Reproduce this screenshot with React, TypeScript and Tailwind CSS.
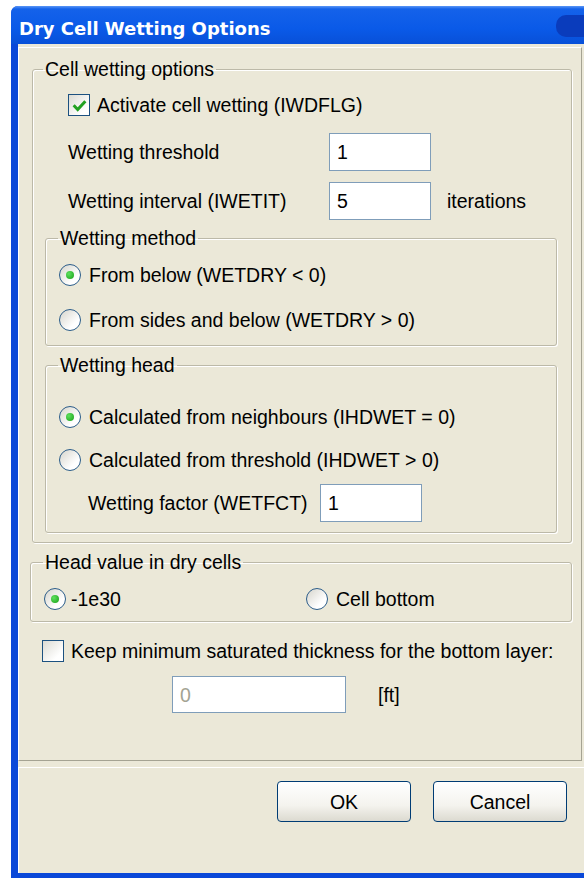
import { ReactNode } from "react";

function CheckBox({ checked }: { checked?: boolean }) {
  return (
    <span className="flex h-[22px] w-[22px] shrink-0 items-center justify-center border border-[#1c5180] bg-[linear-gradient(135deg,#dcdbd3,#ffffff_75%)]">
      {checked && (
        <svg viewBox="0 0 16 16" className="h-[17px] w-[17px]">
          <path d="M2.5 7.8 L6.3 11.8 L13.5 4" fill="none" stroke="#21a121" strokeWidth="2.8" />
        </svg>
      )}
    </span>
  );
}

function Radio({ checked }: { checked?: boolean }) {
  return (
    <span className="flex h-[22px] w-[22px] shrink-0 items-center justify-center rounded-full border border-[#2c5d8a] bg-[linear-gradient(135deg,#d6d5cc,#ffffff_70%)]">
      {checked && <span className="h-[8px] w-[8px] rounded-full bg-[radial-gradient(circle_at_35%_35%,#5fe05f,#16a016)]" />}
    </span>
  );
}

function Field({ value, className, disabled }: { value: string; className: string; disabled?: boolean }) {
  return (
    <div className={`flex items-center border border-[#7f9db9] bg-white px-[7px] ${disabled ? "text-[#a3a393]" : ""} ${className}`}>
      {value}
    </div>
  );
}

// etched group frame: grey line with a white line beside it
function Group({ label, className, children }: { label: string; className: string; children: ReactNode }) {
  return (
    <fieldset className={`rounded-[3px] border border-[#bcb9a8] shadow-[1px_1px_0_#ffffff,inset_1px_1px_0_#ffffff] ${className}`}>
      <legend className="px-[2px] leading-[22px]">{label}</legend>
      {children}
    </fieldset>
  );
}

export default function App() {
  return (
    <div className="h-[878px] w-[584px] overflow-hidden bg-white pl-[11px] pt-[6px] font-['Liberation_Sans',Arial,sans-serif] text-[19.5px] leading-[22px] text-black">
      <div className="flex h-[872px] flex-col overflow-hidden rounded-tl-[7px] bg-[#0a48d8]">
        {/* title bar */}
        <div className="flex h-[38px] shrink-0 items-center justify-between bg-[linear-gradient(#5a96f6_0px,#1462ea_3px,#0a5ae8_60%,#0850d8)] pl-[8px] pt-[8px]">
          <span className="font-['DejaVu_Sans',sans-serif] text-[18px] font-bold text-white">Dry Cell Wetting Options</span>
          <span className="mb-[6px] h-[22px] w-[28px] rounded-l-[10px] bg-[#0a3cbc]" />
        </div>

        <div className="mb-[5px] ml-[7px] flex flex-1 flex-col bg-[#ebe8d8] pt-[3px]">
          {/* options panel */}
          <div className="h-[714px] w-[564px] border border-b-[#a5a393] border-l-white border-r-[#a5a393] border-t-white">
            <Group label="Cell wetting options" className="ml-[13px] mt-[10px] w-[540px] pb-[9px] [&>legend]:ml-[10px]">
              <div className="mt-[14px] flex h-[22px] items-center gap-[7px] pl-[35px]">
                <CheckBox checked />
                <span>Activate cell wetting (IWDFLG)</span>
              </div>
              <div className="mt-[17px] flex h-[38px] items-center pl-[35px]">
                <span className="w-[261px]">Wetting threshold</span>
                <Field value="1" className="h-[38px] w-[102px]" />
              </div>
              <div className="mt-[11px] flex h-[38px] items-center pl-[35px]">
                <span className="w-[261px]">Wetting interval (IWETIT)</span>
                <Field value="5" className="h-[38px] w-[102px]" />
                <span className="ml-[16px]">iterations</span>
              </div>

              <Group label="Wetting method" className="ml-[12px] mt-[7px] w-[512px] pb-[14px] [&>legend]:ml-[12px]">
                <div className="mt-[15px] flex h-[22px] items-center gap-[8px] pl-[13px]">
                  <Radio checked />
                  <span>From below (WETDRY &lt; 0)</span>
                </div>
                <div className="mt-[23px] flex h-[22px] items-center gap-[8px] pl-[13px]">
                  <Radio />
                  <span>From sides and below (WETDRY &gt; 0)</span>
                </div>
              </Group>

              <Group label="Wetting head" className="ml-[12px] mt-[8px] w-[512px] pb-[10px] [&>legend]:ml-[12px]">
                <div className="mt-[30px] flex h-[22px] items-center gap-[8px] pl-[13px]">
                  <Radio checked />
                  <span>Calculated from neighbours (IHDWET = 0)</span>
                </div>
                <div className="mt-[21px] flex h-[22px] items-center gap-[8px] pl-[13px]">
                  <Radio />
                  <span>Calculated from threshold (IHDWET &gt; 0)</span>
                </div>
                <div className="mt-[13px] flex h-[38px] items-center pl-[42px]">
                  <span className="w-[232px]">Wetting factor (WETFCT)</span>
                  <Field value="1" className="h-[38px] w-[102px]" />
                </div>
              </Group>
            </Group>

            <Group label="Head value in dry cells" className="ml-[11px] mt-[8px] w-[542px] pb-[11px] [&>legend]:ml-[12px]">
              <div className="mt-[15px] flex h-[22px] items-center pl-[13px]">
                <div className="flex w-[262px] items-center gap-[5px]">
                  <Radio checked />
                  <span>-1e30</span>
                </div>
                <div className="flex items-center gap-[8px]">
                  <Radio />
                  <span>Cell bottom</span>
                </div>
              </div>
            </Group>

            <div className="ml-[23px] mt-[18px] flex h-[22px] items-center gap-[7px]">
              <CheckBox />
              <span>Keep minimum saturated thickness for the bottom layer:</span>
            </div>
            <div className="ml-[153px] mt-[14px] flex h-[37px] items-center">
              <Field value="0" disabled className="h-[37px] w-[174px]" />
              <span className="ml-[32px]">[ft]</span>
            </div>
          </div>

          {/* dialog buttons */}
          <div className="mt-[6px] flex flex-1 justify-end gap-[22px] border-l border-t border-white pr-[17px] pt-[13px]">
            <button className="h-[41px] w-[134px] rounded-[4px] border border-[#003c74] bg-[linear-gradient(#ffffff,#f4f3ee_60%,#dcdad0)]">
              OK
            </button>
            <button className="h-[41px] w-[134px] rounded-[4px] border border-[#003c74] bg-[linear-gradient(#ffffff,#f4f3ee_60%,#dcdad0)]">
              Cancel
            </button>
          </div>
        </div>
      </div>
    </div>
  );
}
